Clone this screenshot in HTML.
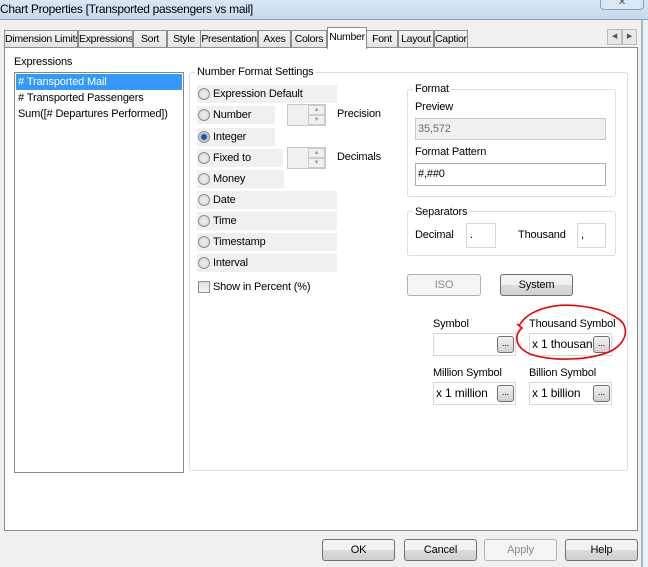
<!DOCTYPE html>
<html><head><style>
*{box-sizing:border-box;margin:0;padding:0}
body{width:648px;height:567px;overflow:hidden;background:#f0f0f0;font-family:"Liberation Sans",sans-serif;font-size:11px;letter-spacing:-0.15px;color:#000;position:relative}
.a{position:absolute;white-space:nowrap}
.tab{position:absolute;top:30px;height:18px;border:1px solid #8c8c8c;border-bottom:none;background:linear-gradient(#f4f4f4,#e2e2e2);text-align:center;line-height:17px;font-size:10.5px;letter-spacing:-0.3px;overflow:hidden;white-space:nowrap}
.box{position:absolute;border:1px solid #abadb3;background:#fff}
.grp{position:absolute;border:1px solid #d5dfe5;border-radius:3px}
.lg{position:absolute;background:#fff;padding:0 2px;line-height:12px}
.rad{position:absolute;width:12px;height:12px;border-radius:50%;border:1px solid #8e8f8f;background:radial-gradient(#f0f0f0,#d4d4d4)}
.hl{position:absolute;height:18px;background:#f0f0f0}
.btn{position:absolute;height:22px;border:1px solid #707070;border-radius:3px;background:linear-gradient(#f2f2f2 50%,#dcdcdc 50%,#d0d0d0);text-align:center;line-height:20px}
.sb{position:absolute;width:17px;height:17px;border:1px solid #707070;border-radius:3px;background:linear-gradient(#f2f2f2,#d0d0d0);font-size:9px;text-align:center;line-height:12px}
</style></head><body>
<div class="a" style="left:0;top:0;width:648px;height:20px;background:linear-gradient(#dbe7f4,#c8d9ec);border-bottom:1px solid #8a9fb8"></div>
<div class="a" style="left:0;top:2px;font-size:12px;letter-spacing:-0.3px">Chart Properties [Transported passengers vs mail]</div>
<div class="a" style="left:600px;top:-4px;width:44px;height:14px;border:1px solid #8a9fb8;border-radius:0 0 4px 4px;background:#dbe7f4;text-align:center;font-size:10px;color:#555">✕</div>
<div class="a" style="left:641px;top:20px;width:2px;height:547px;background:#a8b8cc"></div>

<div class="tab" style="left:4px;width:74px">Dimension Limits</div>
<div class="tab" style="left:78px;width:55px">Expressions</div>
<div class="tab" style="left:133px;width:34px">Sort</div>
<div class="tab" style="left:167px;width:34px">Style</div>
<div class="tab" style="left:200px;width:58px">Presentation</div>
<div class="tab" style="left:258px;width:33px">Axes</div>
<div class="tab" style="left:291px;width:36px">Colors</div>
<div class="tab" style="left:366px;width:32px">Font</div>
<div class="tab" style="left:398px;width:36px">Layout</div>
<div class="tab" style="left:434px;width:34px">Caption</div>
<div class="a" style="left:607px;top:29px;width:15px;height:16px;border:1px solid #bbb;background:#e8e8e8;font-size:7px;text-align:center;line-height:14px;color:#555">◀</div>
<div class="a" style="left:622px;top:29px;width:15px;height:16px;border:1px solid #bbb;background:#e8e8e8;font-size:7px;text-align:center;line-height:14px;color:#555">▶</div>

<div class="a" style="left:4px;top:47px;width:634px;height:484px;border:1px solid #8c8c8c;background:#fff"></div>
<div class="tab" style="left:327px;top:27px;width:40px;height:22px;background:#fff;border-bottom:none;line-height:18px">Number</div>

<div class="a" style="left:14px;top:56px">Expressions</div>
<div class="a" style="left:14px;top:72px;width:170px;height:401px;border:1px solid #828790;background:#fff"></div>
<div class="a" style="left:16px;top:74px;width:166px;height:16px;background:#3399ff"></div>
<div class="a" style="left:18px;top:76px;color:#fff">#&nbsp;Transported Mail</div>
<div class="a" style="left:18px;top:92px">#&nbsp;Transported Passengers</div>
<div class="a" style="left:18px;top:108px">Sum([#&nbsp;Departures Performed])</div>

<div class="grp" style="left:189px;top:72px;width:439px;height:399px"></div>
<div class="lg" style="left:195px;top:66px">Number Format Settings</div>

<div class="hl" style="left:197px;top:85px;width:140px"></div>
<div class="hl" style="left:197px;top:106px;width:78px"></div>
<div class="hl" style="left:197px;top:128px;width:78px"></div>
<div class="hl" style="left:197px;top:149px;width:86px"></div>
<div class="hl" style="left:197px;top:170px;width:87px"></div>
<div class="hl" style="left:197px;top:191px;width:140px"></div>
<div class="hl" style="left:197px;top:212px;width:140px"></div>
<div class="hl" style="left:197px;top:233px;width:140px"></div>
<div class="hl" style="left:197px;top:254px;width:140px"></div>
<div class="rad" style="left:198px;top:88px"></div><div class="a" style="left:213px;top:88px">Expression Default</div>
<div class="rad" style="left:198px;top:109px"></div><div class="a" style="left:213px;top:109px">Number</div>
<div class="rad" style="left:198px;top:131px;background:radial-gradient(#1a4f8a 25%,#5a9bd5 45%,#d4d4d4 55%)"></div><div class="a" style="left:213px;top:131px">Integer</div>
<div class="rad" style="left:198px;top:152px"></div><div class="a" style="left:213px;top:152px">Fixed to</div>
<div class="rad" style="left:198px;top:173px"></div><div class="a" style="left:213px;top:173px">Money</div>
<div class="rad" style="left:198px;top:194px"></div><div class="a" style="left:213px;top:194px">Date</div>
<div class="rad" style="left:198px;top:215px"></div><div class="a" style="left:213px;top:215px">Time</div>
<div class="rad" style="left:198px;top:236px"></div><div class="a" style="left:213px;top:236px">Timestamp</div>
<div class="rad" style="left:198px;top:257px"></div><div class="a" style="left:213px;top:257px">Interval</div>
<div class="a" style="left:198px;top:281px;width:12px;height:12px;border:1px solid #8e8f8f;background:linear-gradient(#e0e0e0,#f4f4f4)"></div>
<div class="a" style="left:213px;top:281px">Show in Percent (%)</div>

<div class="a" style="left:287px;top:104px;width:39px;height:22px;border:1px solid #c8c8c8;background:#f0f0f0"></div>
<div class="a" style="left:308px;top:105px;width:17px;height:10px;border:1px solid #ccc;font-size:6px;color:#999;text-align:center;line-height:8px">▲</div>
<div class="a" style="left:308px;top:115px;width:17px;height:10px;border:1px solid #ccc;font-size:6px;color:#999;text-align:center;line-height:8px">▼</div>
<div class="a" style="left:337px;top:108px">Precision</div>
<div class="a" style="left:287px;top:147px;width:39px;height:22px;border:1px solid #c8c8c8;background:#f0f0f0"></div>
<div class="a" style="left:308px;top:148px;width:17px;height:10px;border:1px solid #ccc;font-size:6px;color:#999;text-align:center;line-height:8px">▲</div>
<div class="a" style="left:308px;top:158px;width:17px;height:10px;border:1px solid #ccc;font-size:6px;color:#999;text-align:center;line-height:8px">▼</div>
<div class="a" style="left:337px;top:151px">Decimals</div>

<div class="grp" style="left:407px;top:89px;width:209px;height:108px"></div>
<div class="lg" style="left:413px;top:83px">Format</div>
<div class="a" style="left:415px;top:101px">Preview</div>
<div class="a" style="left:415px;top:118px;width:191px;height:22px;border:1px solid #c8c8c8;background:#f0f0f0;color:#6d6d6d;padding:4px 2px">35,572</div>
<div class="a" style="left:415px;top:146px">Format Pattern</div>
<div class="box" style="left:415px;top:163px;width:191px;height:23px;padding:4px 2px">#,##0</div>

<div class="grp" style="left:407px;top:211px;width:209px;height:45px"></div>
<div class="lg" style="left:413px;top:206px">Separators</div>
<div class="a" style="left:415px;top:229px">Decimal</div>
<div class="box" style="left:466px;top:223px;width:30px;height:25px;border-color:#d8d8d8;padding:5px 3px">.</div>
<div class="a" style="left:518px;top:229px">Thousand</div>
<div class="box" style="left:577px;top:223px;width:29px;height:25px;border-color:#d8d8d8;padding:5px 3px">,</div>

<div class="a" style="left:407px;top:274px;width:74px;height:22px;border:1px solid #adb2b5;border-radius:3px;background:#f4f4f4;color:#8d8d8d;text-align:center;line-height:20px">ISO</div>
<div class="btn" style="left:500px;top:274px;width:73px">System</div>

<div class="a" style="left:433px;top:318px">Symbol</div>
<div class="box" style="left:433px;top:333px;width:83px;height:23px;border-color:#d8d8d8"></div>
<div class="sb" style="left:497px;top:336px">...</div>
<div class="a" style="left:529px;top:318px">Thousand Symbol</div>
<div class="box" style="left:529px;top:333px;width:83px;height:23px;border-color:#d8d8d8;padding:3px 2px;overflow:hidden;font-size:12px">x 1 thousan</div>
<div class="sb" style="left:593px;top:336px">...</div>
<div class="a" style="left:433px;top:367px">Million Symbol</div>
<div class="box" style="left:433px;top:382px;width:83px;height:23px;border-color:#d8d8d8;padding:3px 2px;font-size:12px">x 1 million</div>
<div class="sb" style="left:497px;top:385px">...</div>
<div class="a" style="left:529px;top:367px">Billion Symbol</div>
<div class="box" style="left:529px;top:382px;width:83px;height:23px;border-color:#d8d8d8;padding:3px 2px;font-size:12px">x 1 billion</div>
<div class="sb" style="left:593px;top:385px">...</div>

<svg class="a" style="left:505px;top:300px" width="130" height="65"><path d="M40 8 C60 2 95 6 112 18 C126 26 122 44 104 52 C84 60 48 62 25 54 C8 46 10 34 17 28 L12 24 M14 26 C18 18 26 12 40 8" fill="none" stroke="#e00" stroke-width="1.6"/></svg>

<div class="btn" style="left:322px;top:539px;width:73px">OK</div>
<div class="btn" style="left:404px;top:539px;width:73px">Cancel</div>
<div class="a" style="left:484px;top:539px;width:73px;height:22px;border:1px solid #adb2b5;border-radius:3px;background:#f4f4f4;color:#8d8d8d;text-align:center;line-height:20px">Apply</div>
<div class="btn" style="left:565px;top:539px;width:73px">Help</div>
</body></html>
